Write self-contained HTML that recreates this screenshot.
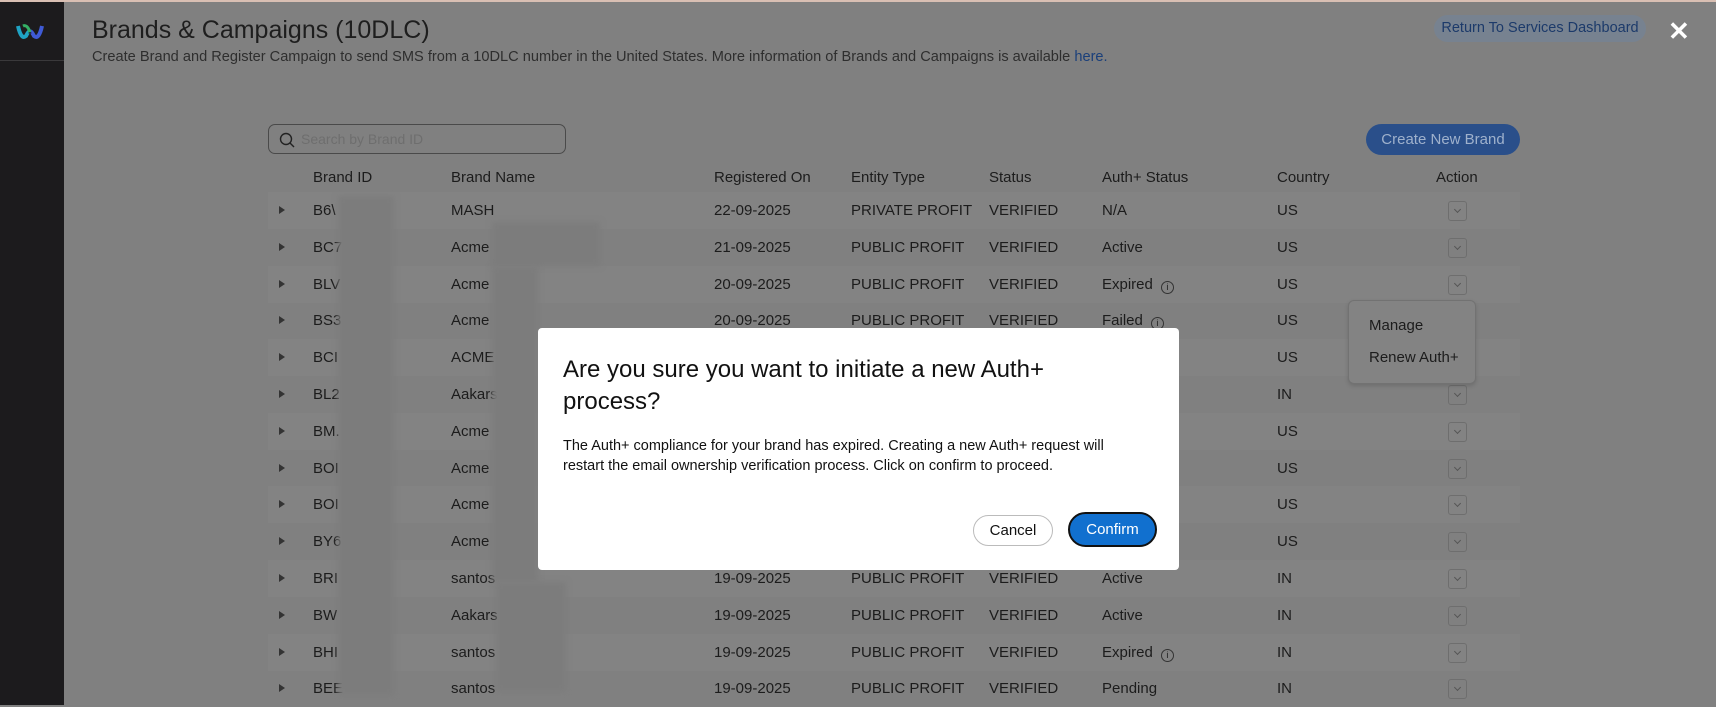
<!DOCTYPE html>
<html><head><meta charset="utf-8"><style>
*{margin:0;padding:0;box-sizing:border-box}
body{width:1716px;height:705px;overflow:hidden;background:#808080;font-family:"Liberation Sans",Arial,sans-serif;position:relative;color:#1c1c1c}
.top{position:absolute;left:0;top:0;width:1716px;height:2px;background:#d9bfb3}
.side{position:absolute;left:0;top:2px;width:64px;height:703px;background:#1c1b1d}
.side .ln{position:absolute;left:0;top:58px;width:64px;height:1px;background:#3a393b}
.a{position:absolute;white-space:nowrap}
.row{position:absolute;left:268px;width:1252px;height:37px}
.row.s{background:#838383}
.c{position:absolute;top:0;line-height:37px;font-size:15px;white-space:nowrap}
.arr{position:absolute;left:11px;top:14px;width:0;height:0;border-left:6px solid #333;border-top:4px solid transparent;border-bottom:4px solid transparent}
.act{position:absolute;left:1180px;top:9px;width:19px;height:20px;border:1px solid #6e6e6e;border-radius:3px}
.act:after{content:"";position:absolute;left:6px;top:5px;width:4px;height:4px;border-right:1px solid #555;border-bottom:1px solid #555;transform:rotate(45deg)}
.i{display:inline-block;width:13px;height:13px;border:1px solid #333;border-radius:50%;font-size:9px;line-height:11px;text-align:center;margin-left:8px;vertical-align:-1px}
.blur{position:absolute;background:#7c7c7c;filter:blur(3px)}
</style></head><body>
<div class="top"></div>
<div class="side"><div class="ln"></div>
<svg style="position:absolute;left:15px;top:20px" width="30" height="20" viewBox="0 0 30 20"><path d="M3 4 Q6 18 11 14 Q14 8 15 10" stroke="#1fa3c4" stroke-width="4" fill="none"/><path d="M27 4 Q24 18 19 14 Q16 8 15 10" stroke="#3f5bd6" stroke-width="4" fill="none"/><path d="M8 4 Q12 2 15 10" stroke="#34b065" stroke-width="3" fill="none"/></svg>
</div>
<div class="a" style="left:92px;top:16px;font-size:25px;color:#1e1e1e">Brands &amp; Campaigns (10DLC)</div>
<div class="a" style="left:92px;top:49px;font-size:14.6px;color:#2e2e2e">Create Brand and Register Campaign to send SMS from a 10DLC number in the United States. More information of Brands and Campaigns is available <span style="color:#1a3f7a">here.</span></div>
<div class="a" style="left:1434px;top:15px;width:212px;height:27px;border-radius:14px;background:#778290;color:#1c3a6a;font-size:14.5px;line-height:27px;text-align:center">Return To Services Dashboard</div>
<div class="a" style="left:1668px;top:16px;font-size:26px;color:#fff;font-weight:bold">✕</div>
<div class="a" style="left:268px;top:124px;width:298px;height:30px;border:1px solid #4a4a4a;border-radius:7px"><svg style="position:absolute;left:10px;top:7px" width="16" height="16"><circle cx="7" cy="7" r="5.5" stroke="#222" stroke-width="1.4" fill="none"/><line x1="11" y1="11" x2="15" y2="15" stroke="#222" stroke-width="1.4"/></svg><span style="position:absolute;left:32px;top:6px;font-size:14px;color:#6e6e6e">Search by Brand ID</span></div>
<div class="a" style="left:1366px;top:124px;width:154px;height:31px;border-radius:16px;background:#2a4f8a;color:#9fb1cc;font-size:15px;line-height:31px;text-align:center">Create New Brand</div>
<div class="row" style="top:160px;height:34px;border-bottom:1px solid #727272">
<div class="c" style="left:45px;line-height:36px">Brand ID</div><div class="c" style="left:183px;line-height:36px">Brand Name</div><div class="c" style="left:446px;line-height:36px">Registered On</div><div class="c" style="left:583px;line-height:36px">Entity Type</div><div class="c" style="left:721px;line-height:36px">Status</div><div class="c" style="left:834px;line-height:36px">Auth+ Status</div><div class="c" style="left:1009px;line-height:36px">Country</div><div class="c" style="left:1168px;line-height:36px">Action</div></div>
<div id="rows"></div>
<script>
var d=[["B6\\","MASH","22-09-2025","PRIVATE PROFIT","N/A","US"],["BC7","Acme","21-09-2025","PUBLIC PROFIT","Active","US"],["BLV","Acme","20-09-2025","PUBLIC PROFIT","Expired*","US"],["BS3","Acme","20-09-2025","PUBLIC PROFIT","Failed*","US"],["BCI","ACME","20-09-2025","PUBLIC PROFIT","Active","US"],["BL2","Aakars","20-09-2025","PUBLIC PROFIT","Pending*","IN"],["BM.","Acme","20-09-2025","PUBLIC PROFIT","Active","US"],["BOI","Acme","20-09-2025","PUBLIC PROFIT","Active","US"],["BOI","Acme","20-09-2025","PUBLIC PROFIT","Active","US"],["BY6","Acme","19-09-2025","PUBLIC PROFIT","Active","US"],["BRI","santos","19-09-2025","PUBLIC PROFIT","Active","IN"],["BW","Aakars","19-09-2025","PUBLIC PROFIT","Active","IN"],["BHI","santos","19-09-2025","PUBLIC PROFIT","Expired*","IN"],["BEE","santos","19-09-2025","PUBLIC PROFIT","Pending","IN"]];
var h="";
d.forEach(function(r,i){var t=192+i*36.8;var au=r[4].replace("*",'<span class="i">i</span>');
h+='<div class="row'+(i%2==0?' s':'')+'" style="top:'+t+'px"><div class="arr"></div><div class="c" style="left:45px">'+r[0]+'</div><div class="c" style="left:183px">'+r[1]+'</div><div class="c" style="left:446px">'+r[2]+'</div><div class="c" style="left:583px">'+r[3]+'</div><div class="c" style="left:721px">VERIFIED</div><div class="c" style="left:834px">'+au+'</div><div class="c" style="left:1009px">'+r[5]+'</div><div class="act"></div></div>';});
h+='<div class="blur" style="left:338px;top:196px;width:56px;height:500px"></div>';
h+='<div class="blur" style="left:492px;top:222px;width:108px;height:44px"></div>';
h+='<div class="blur" style="left:492px;top:266px;width:46px;height:316px"></div>';
h+='<div class="blur" style="left:496px;top:582px;width:70px;height:110px"></div>';
document.getElementById("rows").innerHTML=h;
</script>
<div class="a" style="left:1348px;top:300px;width:128px;height:84px;background:#838383;border:1px solid #727272;border-radius:6px;box-shadow:0 2px 4px rgba(0,0,0,.15)"><div class="a" style="left:20px;top:16px;font-size:15px">Manage</div><div class="a" style="left:20px;top:48px;font-size:15px">Renew Auth+</div></div>
<div class="a" style="left:538px;top:328px;width:641px;height:242px;background:#fff;border-radius:4px">
<div class="a" style="left:25px;top:26px;font-size:24px;line-height:32px;color:#111;white-space:normal;width:560px">Are you sure you want to initiate a new Auth+ process?</div>
<div class="a" style="left:25px;top:108px;font-size:14.5px;line-height:20px;color:#111;white-space:normal;width:560px">The Auth+ compliance for your brand has expired. Creating a new Auth+ request will restart the email ownership verification process. Click on confirm to proceed.</div>
<div class="a" style="left:435px;top:187px;width:80px;height:31px;border:1px solid #bbb;border-radius:16px;font-size:15px;line-height:29px;text-align:center;color:#111">Cancel</div>
<div class="a" style="left:530px;top:184px;width:89px;height:35px;border:2px solid #111;border-radius:18px;background:#1170cf;font-size:15px;line-height:31px;text-align:center;color:#fff">Confirm</div>
</div>
</body></html>
